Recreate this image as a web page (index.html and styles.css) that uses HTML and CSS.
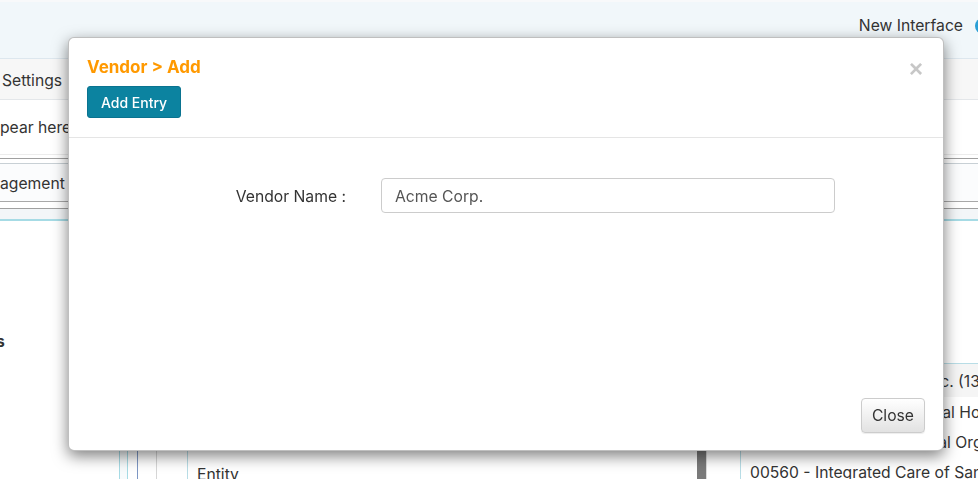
FILE: index.html
```html
<!DOCTYPE html>
<html lang="en">
<head>
<meta charset="utf-8">
<title>Vendor &gt; Add</title>
<link rel="stylesheet" href="styles.css">
</head>
<body>
<div class="page">
  <header class="topbar">
    <span class="nav-link">New Interface</span>
    <span class="avatar"></span>
  </header>
  <nav class="tabs"><span class="tab">Settings</span></nav>
  <div class="notice">pear here</div>
  <section class="panel">
    <div class="panel-inner"><span class="panel-title">agement</span></div>
    <div class="panel-band"></div>
  </section>
  <div class="stage">
    <aside class="sidebar"><span class="side-label">s</span></aside>
    <div class="frame f1">
      <div class="frame f2">
        <div class="frame f3">
          <div class="frame f4">
            <div class="grid-area">
              <div class="grid-row">Entity</div>
            </div>
            <div class="scrollbar"></div>
            <div class="gutter"></div>
          </div>
        </div>
      </div>
    </div>
    <div class="list-col">
      <div class="list-top"></div>
      <ul class="list">
        <li class="list-item active">00111 - Ajax Healthcare Inc. (13)</li>
        <li class="list-item">00411 - Southwest Regional Hospital</li>
        <li class="list-item">00588 - American National Organization</li>
        <li class="list-item">00560 - Integrated Care of San Diego</li>
      </ul>
    </div>
  </div>
</div>

<div class="modal" role="dialog">
  <div class="modal-header">
    <h4 class="modal-title">Vendor &gt; Add</h4>
    <button class="btn btn-primary">Add Entry</button>
    <button class="close" aria-label="Close">&times;</button>
  </div>
  <div class="modal-body">
    <div class="form-row">
      <label class="form-label">Vendor Name :</label>
      <input class="form-input" type="text" value="Acme Corp.">
    </div>
  </div>
  <div class="modal-footer">
    <button class="btn btn-default">Close</button>
  </div>
</div>
</body>
</html>
```

FILE: styles.css
```css
* { box-sizing: border-box; }

html, body {
  margin: 0;
  padding: 0;
  height: 100%;
  overflow: hidden;
  background: #ffffff;
  font-family: "Inter", "Liberation Sans", sans-serif;
  font-size: 15.7px;
  color: #333333;
}

.page {
  width: 978px;
  overflow: hidden;
}

/* top bar */
.topbar {
  height: 58px;
  background: #f1f7fa;
  border-top: 2px solid #f8f9fa;
  display: flex;
  justify-content: flex-end;
  align-items: flex-start;
  padding-top: 14px;
}
.nav-link {
  color: #333;
  line-height: 19px;
}
.avatar {
  width: 16px;
  height: 16px;
  border-radius: 50%;
  background: #2a9fd6;
  margin-left: 12px;
  margin-right: -13px;
  margin-top: 2px;
  flex: none;
}

/* tabs */
.tabs {
  height: 42px;
  background: #f7f7f7;
  border-top: 1px solid #dde7ee;
  border-bottom: 1px solid #e4e7ea;
  display: flex;
  align-items: center;
  padding-left: 2px;
  padding-top: 2px;
}
.tab { line-height: 19px; }

/* notice */
.notice {
  height: 55px;
  display: flex;
  align-items: center;
  border-bottom: 1px solid #ececec;
}

/* panel */
.panel {
  margin-top: 3px;
  border-top: 1px solid #a0a0a0;
}
.panel-inner {
  margin-top: 4px;
  border-top: 1px solid #c8d0d5;
  border-bottom: 1px solid #a8a8a8;
  height: 39px;
  display: flex;
  align-items: center;
  padding-top: 2px;
  background: #fbfcfd;
}
.panel-band {
  margin-top: 6px;
  height: 13px;
  border-top: 1px solid #a0a0a0;
  border-bottom: 2px solid #a6dbe5;
  background: #f3f6f8;
}

/* stage */
.stage {
  display: flex;
  height: 280px;
}
.sidebar {
  width: 119px;
  flex: none;
  padding-top: 111px;
}
.side-label {
  font-weight: 700;
  line-height: 19px;
  margin-left: -4px;
}
.frame {
  display: flex;
}
.f1 {
  width: 621px;
  flex: none;
  border-left: 1px solid #a6dbe5;
  padding-left: 7px;
  background: #f7fbfc;
}
.f2 {
  flex: 1;
  border-left: 1px solid #a6dbe5;
  padding-left: 9px;
  background: #ffffff;
}
.f3 {
  flex: 1;
  border-left: 1px solid #7d97c4;
  padding-left: 18px;
}
.f4 {
  flex: 1;
  border-left: 1px solid #d6d6d6;
  padding-left: 30px;
}
.grid-area {
  flex: 1;
  border-left: 1px solid #b8dde6;
  padding-left: 9px;
  padding-top: 244px;
}
.grid-row {
  line-height: 20px;
}
.scrollbar {
  width: 9px;
  flex: none;
  background: #7a7a7a;
}
.gutter {
  width: 34px;
  flex: none;
  border-left: 1px solid #dcdcdc;
}
.list-col {
  flex: 1;
  border-left: 1px solid #b8dde6;
  min-width: 0;
}
.list-top {
  height: 143px;
  border-bottom: 1px solid #b8dde6;
}
.list {
  list-style: none;
  margin: 0;
  padding: 0;
}
.list-item {
  height: 30px;
  line-height: 32px;
  padding-left: 9px;
  white-space: nowrap;
  overflow: hidden;
}
.list-item.active {
  background: #f5f5f5;
  height: 33px;
  line-height: 36px;
}

/* modal */
.modal {
  position: fixed;
  left: 68px;
  top: 37px;
  width: 876px;
  height: 414px;
  background: #ffffff;
  border: 1px solid rgba(0, 0, 0, 0.25);
  border-radius: 6px;
  box-shadow: 0 5px 15px rgba(0, 0, 0, 0.5);
  display: flex;
  flex-direction: column;
}
.modal-header {
  position: relative;
  padding: 19px 18px 19px 18px;
  border-bottom: 1px solid #e5e5e5;
}
.modal-title {
  margin: 0 0 9px 0;
  font-size: 17px;
  line-height: 20px;
  font-weight: 700;
  color: #ff9900;
}
.close {
  position: absolute;
  right: 20px;
  top: 19px;
  padding: 0;
  border: 0;
  background: transparent;
  font-family: "Liberation Sans", sans-serif;
  font-size: 24px;
  font-weight: 700;
  line-height: 24px;
  color: #c7c7c7;
  cursor: pointer;
}
.btn {
  font-family: "Inter", "Liberation Sans", sans-serif;
  cursor: pointer;
}
.btn-primary {
  height: 32px;
  padding: 0 13px;
  font-size: 14px;
  font-weight: 500;
  color: #ffffff;
  background: #0c83a0;
  border: 1px solid #0a7390;
  border-radius: 3px;
}
.modal-body {
  flex: 1;
  padding: 40px 18px 0 18px;
}
.form-row {
  display: flex;
  align-items: center;
}
.form-label {
  width: 259px;
  text-align: right;
  color: #333;
  flex: none;
  padding-top: 2px;
}
.form-input {
  margin-left: 35px;
  width: 454px;
  height: 35px;
  border: 1px solid #cccccc;
  border-radius: 4px;
  padding: 1px 13px 0 13px;
  font-family: "Inter", "Liberation Sans", sans-serif;
  font-size: 15.7px;
  color: #555555;
  background: #fff;
}
.modal-footer {
  display: flex;
  justify-content: flex-end;
  padding: 0 18px 17px 18px;
}
.btn-default {
  height: 35px;
  padding: 0 10px;
  font-size: 15.7px;
  color: #333;
  background: linear-gradient(to bottom, #ffffff 0%, #e2e2e2 100%);
  border: 1px solid #cccccc;
  border-radius: 4px;
  box-shadow: inset 0 1px 0 rgba(255,255,255,.15), 0 1px 1px rgba(0,0,0,.075);
}
```
